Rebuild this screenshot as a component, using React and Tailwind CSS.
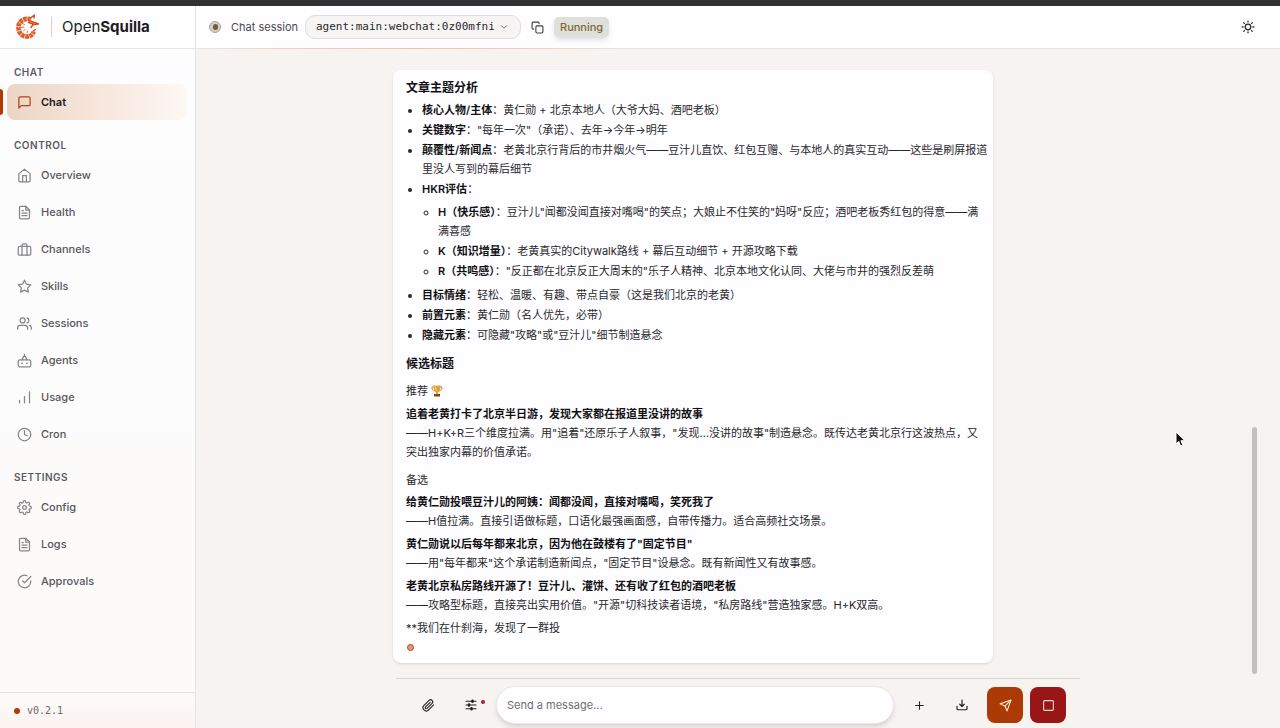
import { useState } from 'react';
import {
  FiHome,
  FiFileText,
  FiBriefcase,
  FiStar,
  FiUsers,
  FiClock,
  FiSettings,
  FiCheckCircle,
  FiMessageSquare,
  FiCopy,
  FiSend,
  FiSquare,
  FiPlus,
  FiChevronDown,
  FiPaperclip,
} from 'react-icons/fi';

function AgentIcon({ className }) {
  return (
    <svg className={className} viewBox="0 0 24 24" fill="none" stroke="currentColor" strokeWidth="2" strokeLinecap="round" strokeLinejoin="round">
      <rect x="2" y="11" width="20" height="11" rx="2.5" />
      <path d="M12 2v2M8 11l2.500-5.500h3L16 11" />
      <path d="M8 16.5h.01M16 16.5h.01" strokeWidth="3" />
    </svg>
  );
}

function BarsIcon({ className }) {
  return (
    <svg className={className} viewBox="0 0 24 24" fill="none" stroke="currentColor" strokeWidth="2" strokeLinecap="round">
      <path d="M4 20.5v-4M12 20.500v-10M20 20.500V3" />
    </svg>
  );
}

function SunIcon({ className }) {
  return (
    <svg className={className} viewBox="0 0 24 24" fill="none" stroke="currentColor" strokeWidth="2.200" strokeLinecap="round">
      <circle cx="12" cy="12" r="4.800" />
      <path d="M12 2v1.500M12 20.500V22M2 12h1.500M20.500 12H22M4.800 4.800l1 1M18.200 18.200l1 1M4.800 19.200l1-1M18.200 5.800l1-1" />
    </svg>
  );
}

function SlidersIcon({ className }) {
  return (
    <svg className={className} viewBox="0 0 24 24" fill="none" stroke="currentColor" strokeWidth="2.200" strokeLinecap="round">
      <path d="M2 4.500h20M2 12h20M2 19.500h20" />
      <path d="M15 3.500v2M8 11v2M13 18.500v2" strokeWidth="5" />
    </svg>
  );
}

function DownloadIcon({ className }) {
  return (
    <svg className={className} viewBox="0 0 24 24" fill="none" stroke="currentColor" strokeWidth="2.400" strokeLinecap="round" strokeLinejoin="round">
      <path d="M12 2v12.500M7.500 10.500l4.500 4.500 4.500-4.500M2 14.500V19a2.500 2.500 0 0 0 2.500 2.500h15A2.500 2.500 0 0 0 22 19v-4.500" />
    </svg>
  );
}

function Logo() {
  return (
    <svg className="h-[26px] w-[26px]" viewBox="0 0 26 26" fill="none" aria-hidden="true">
      {/* shell segments, head to tail */}
      <path d="M17 5.500C11 3.500 5 6.500 4.500 12.500S8 22.500 12.500 22.500c4 0 6.500-1.800 7-5" stroke="#dc5a26" strokeWidth="4.600" strokeDasharray="3.600 .6" />
      <path d="M17 5.500C11 3.500 5 6.500 4.500 12.500S8 22.500 12.500 22.500c4 0 6.500-1.800 7-5" stroke="#f0a27c" strokeWidth=".8" strokeDasharray="1.600 2.600" />
      <path d="M17 3.500L20.500 1l-.5 3M15 6.500l9.500 3.500-4.500.5M14.500 8.500l5 1.500-2.500 3.500M19 17l2.500-1.500" stroke="#d24a18" strokeWidth="1.400" strokeLinecap="round" strokeLinejoin="round" />
      <path d="M8.500 9.500l2 1M7.500 13.500l2.500-.5M9.500 17l1.500-1.500M13 19l.5-2" stroke="#dc5a26" strokeWidth=".9" strokeLinecap="round" />
    </svg>
  );
}

function Trophy() {
  return (
    <svg role="img" aria-label="trophy" className="inline-block h-3 w-3 align-[-2px]" viewBox="0 0 24 24">
      <path d="M6 4H2c0 5 2 8 6 8M18 4h4c0 5-2 8-6 8" fill="none" stroke="#c98a2b" strokeWidth="2" />
      <path d="M5 1h14c0 8-2 12-5 13.500V18h-4v-3.500C7 13 5 9 5 1z" fill="#e3a23a" />
      <path d="M8 3h2c0 4 .5 7 1.500 9C9 10 8 7 8 3z" fill="#f6d58b" />
      <path d="M6 18h12v5H6z" fill="#7a4a1e" />
    </svg>
  );
}

const groups = [
  { label: 'Chat', items: [{ name: 'Chat', icon: FiMessageSquare }] },
  {
    label: 'Control',
    items: [
      { name: 'Overview', icon: FiHome },
      { name: 'Health', icon: FiFileText },
      { name: 'Channels', icon: FiBriefcase },
      { name: 'Skills', icon: FiStar },
      { name: 'Sessions', icon: FiUsers },
      { name: 'Agents', icon: AgentIcon },
      { name: 'Usage', icon: BarsIcon },
      { name: 'Cron', icon: FiClock },
    ],
  },
  {
    label: 'Settings',
    items: [
      { name: 'Config', icon: FiSettings },
      { name: 'Logs', icon: FiFileText },
      { name: 'Approvals', icon: FiCheckCircle },
    ],
  },
];

const candidates = [
  {
    title: '给黄仁勋投喂豆汁儿的阿姨：闻都没闻，直接对嘴喝，笑死我了',
    note: '——H值拉满。直接引语做标题，口语化最强画面感，自带传播力。适合高频社交场景。',
  },
  {
    title: '黄仁勋说以后每年都来北京，因为他在鼓楼有了"固定节目"',
    note: '——用"每年都来"这个承诺制造新闻点，"固定节目"设悬念。既有新闻性又有故事感。',
  },
  {
    title: '老黄北京私房路线开源了！豆汁儿、灌饼、还有收了红包的酒吧老板',
    note: '——攻略型标题，直接亮出实用价值。"开源"切科技读者语境，"私房路线"营造独家感。H+K双高。',
  },
];

function Sidebar({ active, onSelect }) {
  return (
    <aside className="flex w-[196px] shrink-0 flex-col border-r border-[#e6e4e2] bg-linear-to-b from-[#fefdff] to-[#fcfbf9]">
      <div className="flex h-[43px] shrink-0 items-center border-b border-[#e4e2e2] pl-[14px]">
        <Logo />
        <span className="ml-[11px] h-5 w-px bg-[#dccfc6]" />
        <span className="ml-[10px] text-[15px] text-[#1c1c20]">
          Open<b className="font-bold">Squilla</b>
        </span>
      </div>

      <nav className="flex flex-1 flex-col gap-[17px] pt-[15px]">
        {groups.map((group) => (
          <div key={group.label}>
            <h2 className="mb-1 pl-[14px] text-[10px] leading-4 font-semibold tracking-wider text-[#5b5b5f] uppercase">
              {group.label}
            </h2>
            <ul className="flex flex-col gap-px">
              {group.items.map(({ name, icon: Icon }) => {
                const on = name === active;
                return (
                  <li key={name} className="relative pr-2 pl-[7px]">
                    {on && <span className="absolute top-[5px] left-0 h-[26px] w-[3px] rounded-r-sm bg-[#b33a05]" />}
                    <a
                      href={`#${name.toLowerCase()}`}
                      onClick={() => onSelect(name)}
                      className={`flex h-9 items-center gap-[9px] rounded-lg pl-[10px] text-[11px] ${
                        on
                          ? 'bg-linear-to-r from-[#ecd5c5] via-[#f7e6db] to-[#fdf8f5] font-semibold text-[#18181b]'
                          : 'font-medium text-[#57575b]'
                      }`}
                    >
                      <Icon className={`h-[15px] w-[15px] ${on ? 'text-[#b84312]' : 'text-[#858589]'}`} />
                      {name}
                    </a>
                  </li>
                );
              })}
            </ul>
          </div>
        ))}
      </nav>

      <div className="flex h-9 shrink-0 items-center gap-[7px] border-t border-[#e6e3e2] bg-linear-to-b from-[#fcfaf9] to-[#fbf4f1] pl-[14px]">
        <span className="h-[6px] w-[6px] rounded-full bg-[#b33a05]" />
        <span className="font-['DejaVu_Sans_Mono',monospace] text-[10px] text-[#6b6b6f]">v0.2.1</span>
      </div>
    </aside>
  );
}

function Header() {
  return (
    <header className="relative flex h-[43px] shrink-0 items-center border-b border-[#e4e2e2] bg-[#fefdff] pr-[25px] pl-[13px]">
      <span className="flex h-3 w-3 items-center justify-center rounded-full border border-[#a9aaa4] bg-[#d0d0c9]">
        <span className="h-[6px] w-[5px] rounded-sm bg-[#7d5a27]" />
      </span>
      <label htmlFor="session" className="ml-[10px] text-[11px] text-[#4a4a4e]">
        Chat session
      </label>
      <div className="relative ml-[7px]">
        <select
          id="session"
          className="block h-6 w-[216px] appearance-none rounded-[10px] border border-[#dfdedb] bg-[#f6f5f3] pl-[10px] font-['DejaVu_Sans_Mono',monospace] text-[11px] text-[#2a2a2e] outline-none"
        >
          <option>agent:main:webchat:0z00mfni</option>
        </select>
        <FiChevronDown className="pointer-events-none absolute top-[7px] right-3 h-[10px] w-[10px] text-[#55555a]" />
      </div>
      <button type="button" aria-label="Copy session" className="ml-[10px] text-[#3c3c40]">
        <FiCopy className="h-[13px] w-[13px]" />
      </button>
      <span className="ml-[10px] rounded-[5px] bg-[#e0e0da] px-[6px] text-[11px] leading-5 font-medium text-[#7c6636] shadow-md">
        Running
      </span>
      <button type="button" aria-label="Toggle theme" className="ml-auto text-[#2a2a2e]">
        <SunIcon className="h-[14px] w-[14px]" />
      </button>
      <span className="absolute -bottom-px left-0 h-px w-2/5 bg-linear-to-r from-transparent via-[#f0c49c] to-transparent" />
    </header>
  );
}

function Message() {
  return (
    <article className="max-w-[600px] rounded-lg bg-[#fefdff] pt-[9px] pr-[5px] pb-3 pl-[13px] text-[11px] leading-[19px] text-[#29292d] shadow-sm [&_b]:font-semibold [&_b]:text-[#111114]">
      <h3 className="mb-1 text-xs leading-[18px] font-semibold text-[#111114]">文章主题分析</h3>
      <ul className="flex list-outside list-disc flex-col gap-px pl-4">
        <li><b>核心人物/主体</b>：黄仁勋 + 北京本地人（大爷大妈、酒吧老板）</li>
        <li><b>关键数字</b>："每年一次"（承诺）、去年→今年→明年</li>
        <li>
          <b>颠覆性/新闻点</b>：老黄北京行背后的市井烟火气——豆汁儿直饮、红包互赠、与本地人的真实互动——这些是刷屏报道里没人写到的幕后细节
        </li>
        <li>
          <b>HKR评估</b>：
          <ul className="my-1 flex list-outside list-[circle] flex-col gap-px pl-4">
            <li><b>H（快乐感）</b>：豆汁儿"闻都没闻直接对嘴喝"的笑点；大娘止不住笑的"妈呀"反应；酒吧老板秀红包的得意——满满喜感</li>
            <li><b>K（知识增量）</b>：老黄真实的Citywalk路线 + 幕后互动细节 + 开源攻略下载</li>
            <li><b>R（共鸣感）</b>："反正都在北京反正大周末的"乐子人精神、北京本地文化认同、大佬与市井的强烈反差萌</li>
          </ul>
        </li>
        <li><b>目标情绪</b>：轻松、温暖、有趣、带点自豪（这是我们北京的老黄）</li>
        <li><b>前置元素</b>：黄仁勋（名人优先，必带）</li>
        <li><b>隐藏元素</b>：可隐藏"攻略"或"豆汁儿"细节制造悬念</li>
      </ul>

      <h3 className="mt-[10px] mb-[9px] text-xs leading-[18px] font-semibold text-[#111114]">候选标题</h3>
      <h4 className="mb-1">推荐 <Trophy /></h4>
      <p className="mb-[9px]">
        <b>追着老黄打卡了北京半日游，发现大家都在报道里没讲的故事</b>
        <br />
        ——H+K+R三个维度拉满。用"追着"还原乐子人叙事，"发现…没讲的故事"制造悬念。既传达老黄北京行这波热点，又突出独家内幕的价值承诺。
      </p>

      <h4 className="mb-[3px]">备选</h4>
      <div className="flex flex-col gap-1">
        {candidates.map((c) => (
          <p key={c.title}>
            <b>{c.title}</b>
            <br />
            {c.note}
          </p>
        ))}
        <p>**我们在什刹海，发现了一群投</p>
      </div>
      <span className="mt-[6px] ml-px block h-[7px] w-[7px] rounded-full border border-[#a8481a] bg-[#e39a72]" />
    </article>
  );
}

function Composer() {
  const [text, setText] = useState('');
  const iconButton = 'relative flex h-9 w-9 shrink-0 items-center justify-center text-[#1f1f23]';

  return (
    <form
      onSubmit={(e) => e.preventDefault()}
      className="mx-auto flex w-full max-w-[684px] shrink-0 items-center gap-[7px] border-t border-[#d9d7d5] px-[14px] pt-[7px] pb-1"
    >
      <button type="button" aria-label="Attach file" className={iconButton}>
        <FiPaperclip className="h-[13px] w-[13px]" />
      </button>
      <button type="button" aria-label="Options" className={iconButton}>
        <SlidersIcon className="h-3 w-3" />
        <span className="absolute top-[13px] right-1 h-1 w-1 rounded-full bg-[#b91c1c]" />
      </button>
      <input
        aria-label="Message"
        value={text}
        onChange={(e) => setText(e.target.value)}
        placeholder="Send a message..."
        className="h-[38px] min-w-0 flex-1 rounded-full border border-[#e9e7e6] bg-[#fefdff] px-[10px] text-[11px] text-[#1f1f23] shadow-md outline-none placeholder:text-[#6f6f73]"
      />
      <button type="button" aria-label="New chat" className={iconButton}>
        <FiPlus className="h-[13px] w-[13px]" />
      </button>
      <button type="button" aria-label="Export" className={iconButton}>
        <DownloadIcon className="h-3 w-3" />
      </button>
      <button type="submit" aria-label="Send" className="flex h-9 w-9 shrink-0 items-center justify-center rounded-lg bg-[#ab3a04] text-[#fbe9dc]">
        <FiSend className="h-[13px] w-[13px]" />
      </button>
      <button type="button" aria-label="Stop" className="flex h-9 w-9 shrink-0 items-center justify-center rounded-lg bg-[#991616] text-[#f6d9cf]">
        <FiSquare className="h-[13px] w-[13px]" />
      </button>
    </form>
  );
}

export default function App() {
  const [active, setActive] = useState('Chat');

  return (
    <div className="relative flex h-screen flex-col overflow-hidden bg-[#f6f3f0] font-['Inter','Noto_Sans_CJK_SC',sans-serif]">
      <div className="h-[6px] shrink-0 bg-[#323133]" />
      <div className="flex min-h-0 flex-1">
        <Sidebar active={active} onSelect={setActive} />
        <main className="flex min-w-0 flex-1 flex-col">
          <Header />
          <section className="relative min-h-0 flex-1 overflow-hidden pt-[21px]">
            <div className="mx-auto max-w-[690px]">
              <Message />
            </div>
            <span className="absolute right-[23px] bottom-1 h-[247px] w-[5px] rounded-full bg-[#c3c1c0]" />
          </section>
          <Composer />
        </main>
      </div>

      {/* mouse pointer */}
      <svg className="pointer-events-none absolute top-[431px] left-[1175px] h-4 w-[11px]" viewBox="0 0 11 16">
        <path d="M1 1v12l2.800-2.600L5.600 15l2.200-1-1.900-4.300h4z" fill="#111" stroke="#fff" strokeWidth="1" />
      </svg>
    </div>
  );
}
